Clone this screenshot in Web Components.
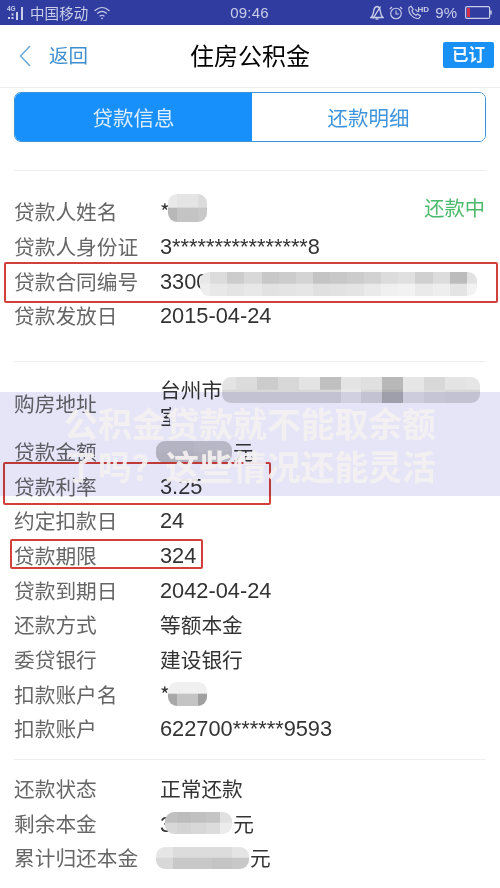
<!DOCTYPE html>
<html lang="zh"><head><meta charset="utf-8"><title>住房公积金</title>
<style>
html,body{margin:0;padding:0;background:#fff}
body{font-family:"Noto Sans CJK SC","Liberation Sans",sans-serif}
</style></head><body>
<loan-page>
  <status-bar></status-bar>
  <nav-bar title="住房公积金"></nav-bar>
  <seg-tabs></seg-tabs>
  <info-section first pad-top="24" pad-bottom="27">
    <info-row label="贷款人姓名">*<blur-patch x="168" y="-1" w="39" h="28" top="e9,e4,e4,dc" bot="b8,c4,c4,c8"></blur-patch><status-tag>还款中</status-tag></info-row>
    <info-row label="贷款人身份证" num>3****************8</info-row>
    <info-row label="贷款合同编号" num>3300<blur-patch x="200" y="8" w="277" h="24" top="e8,dc,cc,d8,c8,cc,d4,c4,c8,cc,d2,dc,e0,d0,dc,bc,e2" bot="ee,e8,e4,e8,e2,e4,e6,e0,e2,e4,ea,f0,f2,ea,ee,e4,f2"></blur-patch><red-box x="4" y="-2" w="494" h="41"></red-box></info-row>
    <info-row label="贷款发放日" num>2015-04-24</info-row>
  </info-section>
  <info-section pad-top="11" pad-bottom="12">
    <info-row label="购房地址" tall><span>台州市<br>室</span><blur-patch x="222" y="4" w="258" h="26" top="e4,dc,cc,d8,e4,c0,e4,e0,b8,e6,d8,e4,e6" bot="d8,d8,d8,d8,d8,d8,e8,d8,b0,e4,dc,d8,d8"></blur-patch><blur-patch x="170" y="33" w="12" h="24" top="ff,ff" bot="ff,ff"></blur-patch></info-row>
    <info-row label="贷款金额"><blur-patch x="156" y="6" w="76" h="22" top="c8,c8,cc,cc" bot="c4,c4,c8,c8"></blur-patch><span style="margin-left:73px">元</span></info-row>
    <info-row label="贷款利率" num>3.25<red-box x="3" y="-7" w="268" h="43"></red-box></info-row>
    <info-row label="约定扣款日" num>24</info-row>
    <info-row label="贷款期限" num>324<red-box x="10" y="0" w="193" h="30"></red-box></info-row>
    <info-row label="贷款到期日" num>2042-04-24</info-row>
    <info-row label="还款方式">等额本金</info-row>
    <info-row label="委贷银行">建设银行</info-row>
    <info-row label="扣款账户名">*<blur-patch x="168" y="5" w="39" h="24" top="f0,f0,f0,f0" bot="a8,c4,c4,a0"></blur-patch></info-row>
    <info-row label="扣款账户" num>622700******9593</info-row>
  </info-section>
  <info-section pad-top="12" pad-bottom="0">
    <info-row label="还款状态">正常还款</info-row>
    <info-row label="剩余本金"><span style="font-family:'Liberation Sans';font-size:21.800px">3</span><blur-patch x="165" y="6" w="67" h="22" top="c0,bc,c0,c4,e0" bot="d8,d4,d8,dc,ec"></blur-patch><span style="margin-left:61px">元</span></info-row>
    <info-row label="累计归还本金"><blur-patch x="156" y="6" w="93" h="22" top="e6,dc,dc,dc,e4" bot="d8,c8,c8,c4,c8"></blur-patch><span style="margin-left:90px">元</span></info-row>
  </info-section>
  <promo-banner><div>公积金贷款就不能取余额</div><div>了吗？这些情况还能灵活</div></promo-banner>
</loan-page>
<script>
function el(name, css, html, init){
  customElements.define(name, class extends HTMLElement{
    constructor(){super();this.attachShadow({mode:"open"});}
    connectedCallback(){
      const a=n=>this.getAttribute(n);
      this.shadowRoot.innerHTML="<style>"+(typeof css==="function"?css(a,this):css)+"</style>"+(typeof html==="function"?html(a,this):html);
    }
  });
}
el("loan-page",":host{display:block;position:relative;width:500px;height:888px;overflow:hidden;background:#fff;font-family:'Noto Sans CJK SC','Liberation Sans',sans-serif}","<slot></slot>");
el("status-bar",
`:host{display:flex;align-items:center;height:25px;background:#303c9f;color:#c9cee9;font:14.5px 'Noto Sans CJK SC',sans-serif;position:relative}
svg{display:block;flex:none}
.l{display:flex;align-items:center;padding-left:7px;flex:1}
.c{font:15px 'Liberation Sans',sans-serif;flex:none;letter-spacing:.2px}
.r{display:flex;align-items:center;justify-content:flex-end;flex:1;padding-right:8px}
.carrier{margin-left:5px;margin-right:6px;line-height:25px;letter-spacing:.1px}
.pct{font:15px 'Liberation Sans',sans-serif;margin:0 8px 0 6px}
.g{font:bold 6.5px 'Liberation Sans',sans-serif;fill:#c9cee9}`,
`<div class="l">
<svg width="18" height="18" viewBox="0 0 18 18"><text class="g" x="0" y="7">4G</text><rect x="1" y="13" width="2" height="2" fill="#c9cee9"/><rect x="4.500" y="9.500" width="2" height="2" fill="#c9cee9"/><rect x="4.500" y="13" width="2" height="2" fill="#c9cee9"/><rect x="9" y="8" width="2" height="8" fill="#c9cee9"/><rect x="14" y="3" width="2" height="13" fill="#c9cee9"/></svg>
<span class="carrier">中国移动</span>
<svg width="16" height="14" viewBox="0 0 16 14" fill="none" stroke="#c9cee9" stroke-width="1.200" stroke-linecap="round"><path d="M1 4.500Q8-1.500 15 4.500"/><path d="M3.500 7.200Q8 3.500 12.500 7.200"/><path d="M6 10Q8 8.500 10 10"/><circle cx="8" cy="12.300" r=".9" fill="#c9cee9" stroke="none"/></svg>
</div>
<div class="c">09:46</div>
<div class="r">
<svg width="14" height="15" viewBox="0 0 14 15" fill="none" stroke="#c9cee9" stroke-width="1.400"><path d="M1 12.500Q3 11 3.500 7Q4 2 7 1.500Q10 2 10.500 7Q11 11 13 12.500Z"/><path d="M5.500 14h3"/><path d="M3 13.500L10.500 1.500"/></svg>
<svg style="margin-left:5px" width="14" height="14" viewBox="0 0 14 14" fill="none" stroke="#c9cee9" stroke-width="1.100"><circle cx="7" cy="7.500" r="5.300"/><path d="M7 4.500V8H9.800"/><path d="M.8 3L3 1M13.200 3L11 1"/></svg>
<svg style="margin-left:5px" width="21" height="15" viewBox="0 0 21 15" fill="none" stroke="#c9cee9" stroke-width="1.100"><path d="M1 2.500L3.200 1.200L5.200 4.500L3.800 5.800Q5 9 8 10.300L9.500 9L12.500 11L11 13.200Q7 14.500 3.500 10.500Q0 6.500 1 2.500Z"/><path d="M7 4.500A4 4 0 0 1 9.500 7"/><text class="g" x="9.500" y="7" style="font-size:8px;stroke:none">HD</text></svg>
<span class="pct">9%</span>
<svg width="27" height="13" viewBox="0 0 27 13"><rect x=".6" y=".6" width="24" height="11.800" rx="1.500" fill="none" stroke="#c9cee9" stroke-width="1.200"/><rect x="2" y="2" width="3" height="9" fill="#d2304a"/><rect x="25.200" y="4.500" width="1.500" height="4" fill="#c9cee9"/></svg>
</div>`);
el("nav-bar",
`:host{display:grid;grid-template-columns:1fr auto 1fr;align-items:center;height:62px;border-bottom:1px solid #eeeeee;font-family:'Noto Sans CJK SC',sans-serif}
.back{display:flex;align-items:center;padding-left:19px;color:#3f8fd0;font-size:19.500px}
.back svg{margin-right:18px;display:block}
.back span{margin-top:-3px}
h1{margin:0;font-size:24px;font-weight:400;color:#000;line-height:32px;margin-top:-2px}
.end{display:flex;justify-content:flex-end;padding-right:6px}
.btn{width:51px;height:26px;line-height:25px;text-align:center;background:#1890f5;color:#f2f8ff;border-radius:2px;font-size:16.500px;font-weight:700;margin-top:-2px}`,
a=>`<div class="back"><svg width="12" height="22" viewBox="0 0 12 22" fill="none" stroke="#6aa5d6" stroke-width="1.400"><path d="M11 1L1.500 11L11 21"/></svg><span>返回</span></div><h1>${a("title")}</h1><div class="end"><div class="btn">已订</div></div>`);
el("seg-tabs",
`:host{display:grid;grid-template-columns:237px 1fr;box-sizing:border-box;width:472px;height:50px;margin:4px 14px 0;border:1.500px solid #3d94dc;border-radius:7px;overflow:hidden;font:20.500px 'Noto Sans CJK SC',sans-serif}
div{display:flex;align-items:center;justify-content:center}
.on{background:#1890fb;color:#dcedff}.off{background:#fff;color:#3f95dc}`,
`<div class="on">贷款信息</div><div class="off">还款明细</div>`);
el("info-section",
(a,t)=>`:host{display:block;margin:${a("first")!==null?"28px":"0"} 14px 0;border-top:1px solid #eeeeee;padding-top:${a("pad-top")}px;padding-bottom:${a("pad-bottom")}px}`,
"<slot></slot>");
el("info-row",
(a)=>`:host{display:flex;align-items:center;position:relative;height:${a("tall")!==null?"62px":"34.670px"};margin-left:-14px;width:500px;color:#333}
.lab{flex:none;width:160px;padding-left:14px;box-sizing:border-box;color:#666;font-size:20.700px;white-space:nowrap;position:relative;top:-1px}
.val{flex:1;color:#333;white-space:nowrap;font:${a("tall")!==null?"20.700px/27px":"20.700px"} ${a("num")!==null?"'Liberation Sans'":"'Noto Sans CJK SC'"},sans-serif;${a("num")!==null?"font-size:21.800px;":"margin-bottom:2px;"}}`,
a=>`<div class="lab">${a("label")}</div><div class="val"><slot></slot></div>`);
el("status-tag",":host{position:absolute;right:15px;top:-3px;color:#4cba6c;font:20.300px 'Noto Sans CJK SC',sans-serif}","<slot></slot>");
el("blur-patch",
(a)=>{
  const g=s=>{const p=s.split(",");const n=p.length;return "linear-gradient(90deg,"+p.map((c,i)=>"#"+c+c.slice(0,2)+c.slice(0,2)+" "+(i/n*100)+"% "+((i+1)/n*100)+"%").join(",")+")";};
  return `:host{position:absolute;left:${a("x")}px;top:${a("y")}px;width:${a("w")}px;height:${a("h")}px;border-radius:9px;overflow:hidden}
.t,.b{height:50%;filter:blur(.7px);transform:scale(1.05)}
.t{background:${g(a("top"))}}.b{background:${g(a("bot"))}}`;
},
`<div class="t"></div><div class="b"></div>`);
el("red-box",
a=>`:host{position:absolute;box-sizing:border-box;left:${a("x")}px;top:${a("y")}px;width:${a("w")}px;height:${a("h")}px;border:2px solid #d2403a;border-radius:2px;pointer-events:none}`,"");
el("promo-banner",
`:host{position:absolute;left:0;top:392px;width:500px;height:104px;display:flex;flex-direction:column;align-items:center;justify-content:center;color:#f5f1f1;font:700 33.800px/43px 'Noto Sans CJK SC',sans-serif}
.tint{position:absolute;inset:0;background:#e6e5f8;mix-blend-mode:multiply}
.txt{position:relative;text-align:center;white-space:nowrap;opacity:.93}`,
`<div class="tint"></div><div class="txt"><slot></slot></div>`);
</script>
</body></html>
